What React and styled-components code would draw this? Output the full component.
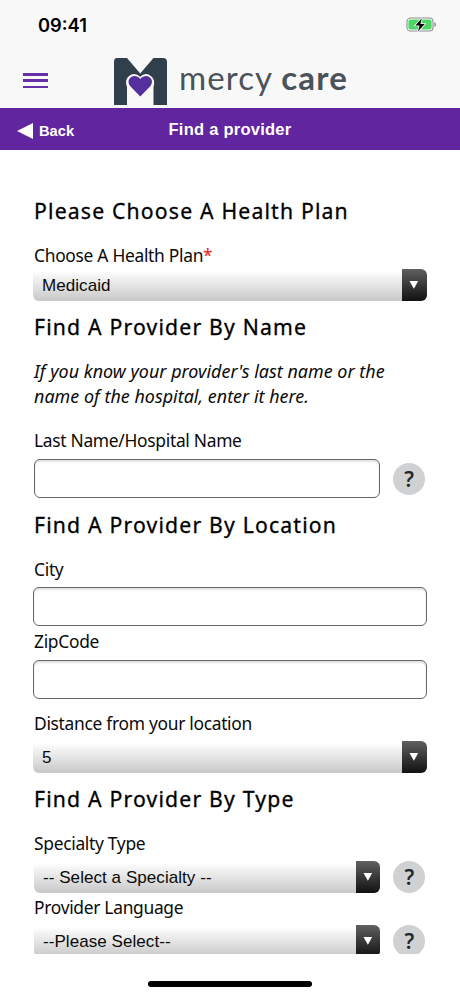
import React from "react";
import styled, { createGlobalStyle } from "styled-components";

const GlobalStyle = createGlobalStyle`
  * {
    box-sizing: border-box;
  }
  body {
    margin: 0;
    background: #fff;
  }
`;
const Screen = styled.div`
  width: 460px;
  height: 996px;
  display: flex;
  flex-direction: column;
  overflow: hidden;
  background: #fff;
  color: #0a0a0a;
  font-family: "Noto Sans", "Open Sans", sans-serif;
`;
const StatusBar = styled.div`
  height: 50px;
  padding: 0 23px 0 38px;
  display: flex;
  align-items: center;
  justify-content: space-between;
  background: #f8f8f8;
`;
const Time = styled.span`
  font-family: Inter, sans-serif;
  font-size: 18.3px;
  font-weight: 600;
  color: #000;
`;
const LogoBar = styled.header`
  height: 58px;
  padding-left: 23px;
  display: flex;
  background: #f8f8f8;
`;
const MenuButton = styled.button`
  width: 26px;
  height: 17px;
  margin: 22px 64px 0 0;
  padding: 1px 0;
  border: none;
  background: none;
  display: flex;
  flex-direction: column;
  justify-content: space-between;
`;
const MenuLine = styled.span`
  width: 25px;
  height: 2.5px;
  background: #6530a5;
`;
const Brand = styled.div`
  display: flex;
  align-items: flex-start;
`;
const LogoMark = styled.svg`
  margin-top: 8px;
`;
const Word = styled.span`
  margin: 7px 0 0 ${(p) => p.$left}px;
  font-family: Lato, sans-serif;
  font-size: 33px;
  line-height: 40px;
  font-weight: ${(p) => (p.$bold ? 700 : 400)};
  letter-spacing: ${(p) => p.$spacing}px;
  color: #4b5259;
`;
const TitleBar = styled.nav`
  height: 42px;
  flex: none;
  display: grid;
  grid-template-columns: 150px 160px 150px;
  align-items: center;
  background: #60259f;
  color: #fff;
  font-family: "Liberation Sans", Arial, sans-serif;
  font-weight: 700;
`;
const Back = styled.div`
  padding: 3px 0 0 17px;
  display: flex;
  align-items: center;
  gap: 6px;
  font-size: 14.7px;
`;
const Title = styled.div`
  font-size: 16.5px;
  letter-spacing: 0.25px;
  text-align: center;
  white-space: nowrap;
`;
const Form = styled.main`
  height: 804px;
  flex: none;
  padding: 46px 33px 0;
  overflow: hidden;
`;
const Heading = styled.h2`
  height: 30px;
  margin: ${(p) => p.$top || 0}px 0 0 1px;
  font-size: 21.2px;
  line-height: 30px;
  font-weight: 400;
  letter-spacing: 1.18px;
  white-space: nowrap;
  color: #000;
  -webkit-text-stroke: 0.3px #000;
`;
const Label = styled.label`
  display: block;
  height: 24px;
  margin: ${(p) => p.$top}px 0 0 1px;
  font-size: 17.4px;
  line-height: 24px;
  letter-spacing: -0.3px;
  white-space: nowrap;
`;
const Required = styled.span`
  color: #e22;
`;
const Hint = styled.p`
  margin: 17px 0 0 1px;
  font-size: 17.9px;
  line-height: 25px;
  font-style: italic;
  letter-spacing: 0.03px;
  white-space: nowrap;
`;
const Row = styled.div`
  margin-top: ${(p) => p.$top}px;
  padding-left: ${(p) => (p.$help ? 1 : 0)}px;
  display: flex;
  align-items: center;
  gap: 13px;
`;
const Input = styled.input`
  width: ${(p) => (p.$short ? 346 : 394)}px;
  height: 39px;
  padding: 0 8px;
  border: 1.5px solid #666;
  border-radius: 6px;
  background: #fff;
  box-shadow: inset 0 2px 2px #e2e2e2;
`;
const Select = styled.div`
  width: ${(p) => (p.$short ? 346.4 : 394)}px;
  height: 32px;
  display: flex;
  border-radius: 6px;
  overflow: hidden;
  background: linear-gradient(#fff 8%, #f5f5f5 22%, #c8c8c8);
`;
const Value = styled.span`
  flex: 1;
  padding-left: 9px;
  font-family: "Liberation Sans", Arial, sans-serif;
  font-size: 17px;
  line-height: 34px;
  letter-spacing: 0.06px;
  white-space: nowrap;
`;
const Arrow = styled.span`
  width: 24.7px;
  padding: 12px 0 0 7px;
  background: linear-gradient(#606060, #111);
  display: flex;
`;
const Help = styled.button`
  width: 32px;
  height: 32px;
  flex: none;
  padding: 0;
  border: none;
  border-radius: 50%;
  background: #cfd1d3;
  color: #24272c;
  font-family: "Noto Sans", sans-serif;
  font-size: 21px;
  font-weight: 600;
  line-height: 32px;
`;
const HomeArea = styled.footer`
  flex: 1;
  display: flex;
  justify-content: center;
  padding-top: 27px;
`;
const HomeIndicator = styled.div`
  width: 164px;
  height: 6px;
  border-radius: 3px;
  background: #000;
`;

const Battery = () => (
  <svg width="31" height="16" viewBox="0 0 31 16">
    <rect x="1" y="1" width="26" height="13" rx="3.5" fill="#fff" stroke="#8c8c8c" strokeWidth="1.1" />
    <rect x="2.4" y="2.4" width="23.2" height="10.2" rx="2" fill="#4cd765" />
    <path d="M28.5 5.2c1.8.7 1.8 3.9 0 4.6z" fill="#777" />
    <path
      d="M15.8 1.2 9.4 8.4h4.2l-1.7 6L18.7 7h-4.3z"
      fill="#000"
      stroke="#f8f8f8"
      strokeWidth="1.6"
      paintOrder="stroke"
    />
  </svg>
);

const Logo = () => (
  <LogoMark width="54" height="47" viewBox="0 0 54 47">
    <path
      d="M4 0H14L27.2 15.5 40.5 0H50Q54 0 54 4V47H40.5V29Q42.5 22 38.5 18.5 32.5 13.5 27.2 18.8 21.5 13.5 15.5 18.5 11.5 22 14 29V47H1V4Q1 0 4 0Z"
      fill="#303f4b"
    />
    <path
      d="M27.3 38.5 17.3 28.3C11.5 21 21.3 13.8 27.3 21 33.3 13.8 43 21 37.3 28.3Z"
      fill="#55309c"
    />
  </LogoMark>
);

const SelectBox = ({ value, short }) => (
  <Select $short={short}>
    <Value>{value}</Value>
    <Arrow>
      <svg width="10" height="8" viewBox="0 0 10 8">
        <path d="M.5 0h8.7L4.9 7.8z" fill="#fff" />
      </svg>
    </Arrow>
  </Select>
);

const App = () => {
  return (
    <Screen>
      <GlobalStyle />
      <StatusBar>
        <Time>09:41</Time>
        <Battery />
      </StatusBar>
      <LogoBar>
        <MenuButton aria-label="Menu">
          <MenuLine />
          <MenuLine />
          <MenuLine />
        </MenuButton>
        <Brand>
          <Logo />
          <Word $left={12} $spacing={1.1}>mercy</Word>
          <Word $left={8} $spacing={1.2} $bold>care</Word>
        </Brand>
      </LogoBar>
      <TitleBar>
        <Back>
          <svg width="16" height="16" viewBox="0 0 16 16">
            <path d="M0 8 16 0v16z" fill="#fff" />
          </svg>
          Back
        </Back>
        <Title>Find a provider</Title>
      </TitleBar>
      <Form>
        <Heading>Please Choose A Health Plan</Heading>
        <Label $top={17}>
          Choose A Health Plan<Required>*</Required>
        </Label>
        <Row $top={2}>
          <SelectBox value="Medicaid" />
        </Row>
        <Heading $top={11}>Find A Provider By Name</Heading>
        <Hint>
          If you know your provider's last name or the
          <br />
          name of the hospital, enter it here.
        </Hint>
        <Label $top={19}>Last Name/Hospital Name</Label>
        <Row $top={7} $help>
          <Input $short />
          <Help>?</Help>
        </Row>
        <Heading $top={12}>Find A Provider By Location</Heading>
        <Label $top={17}>City</Label>
        <Row $top={6}>
          <Input />
        </Row>
        <Label $top={3}>ZipCode</Label>
        <Row $top={7}>
          <Input />
        </Row>
        <Label $top={12}>Distance from your location</Label>
        <Row $top={6}>
          <SelectBox value="5" />
        </Row>
        <Heading $top={11}>Find A Provider By Type</Heading>
        <Label $top={17}>Specialty Type</Label>
        <Row $top={6} $help>
          <SelectBox value="-- Select a Specialty --" short />
          <Help>?</Help>
        </Row>
        <Label $top={2}>Provider Language</Label>
        <Row $top={6} $help>
          <SelectBox value="--Please Select--" short />
          <Help>?</Help>
        </Row>
      </Form>
      <HomeArea>
        <HomeIndicator />
      </HomeArea>
    </Screen>
  );
};

export default App;
